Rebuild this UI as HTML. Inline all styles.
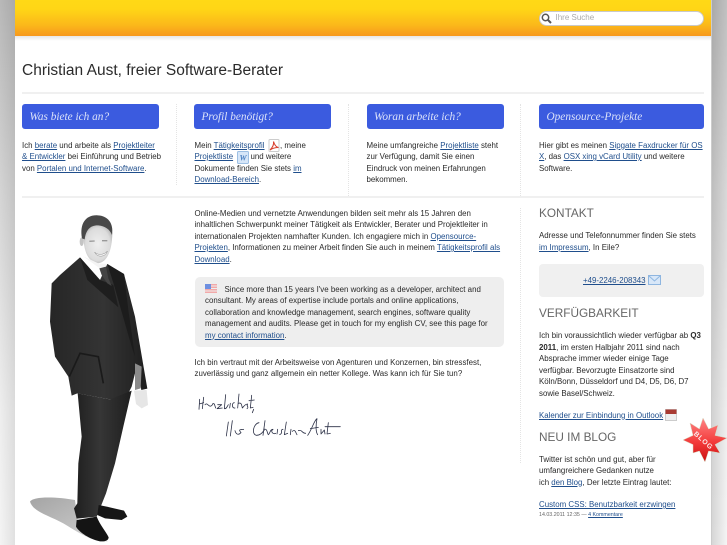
<!DOCTYPE html>
<html lang="de"><head><meta charset="utf-8"><title>Christian Aust</title>
<style>
html,body{margin:0;padding:0;background:#fff}
#p{position:relative;width:727px;height:545px;overflow:hidden;background:#fff;font-family:"Liberation Sans",sans-serif;color:#222}
.a{position:absolute}
.t{position:absolute;font-size:7.9px;line-height:11.5px;white-space:nowrap;color:#2a2a2a}
a{color:#1f4e8c;text-decoration:underline}
.b{position:absolute;top:104px;height:25px;background:#3b5bdf;border-radius:3px;color:#dbe2fa;font:italic 11.3px/27px "Liberation Serif",serif;padding-left:7.5px;box-sizing:border-box}
.h{position:absolute;left:539px;font-size:11.8px;line-height:14px;color:#666;white-space:nowrap}
.hr{position:absolute;left:22px;width:682px;height:2px;background:#f0f0f0}
.v{position:absolute;width:0;border-left:1px dotted #e4e4e4}
</style></head><body><div id="p">
<div class="a" style="left:0;top:0;width:15px;height:545px;background:linear-gradient(90deg,rgba(0,0,0,0),rgba(0,0,0,.08)),linear-gradient(#b8b8b8,#d4d4d4 35%,#eee 75%,#f4f4f4);"></div>
<div class="a" style="left:711px;top:0;width:16px;height:545px;background:linear-gradient(270deg,rgba(0,0,0,0),rgba(0,0,0,.12)),linear-gradient(#c0c0c0,#d8d8d8 35%,#eee 75%,#f4f4f4);border-left:1px solid #ccc;box-sizing:border-box"></div>
<div class="a" style="left:15px;top:0;width:696px;height:36px;background:linear-gradient(#ffd916 0,#ffd616 25%,#fbb81a 70%,#f7981d 100%)"></div>
<div class="a" style="left:15px;top:36px;width:696px;height:5px;background:linear-gradient(#e6e6e6,#fff)"></div>
<div class="a" style="left:539px;top:11px;width:165px;height:15px;box-sizing:border-box;background:#fff;border:1px solid #c9c9c9;border-radius:8px"></div>
<svg class="a" style="left:540px;top:12px" width="14" height="13" viewBox="0 0 14 13"><circle cx="5.5" cy="5.5" r="3.2" fill="none" stroke="#555" stroke-width="1.5"/><path d="M8 8l3 3" stroke="#555" stroke-width="2"/></svg>
<div class="t" style="left:555.5px;top:12px;color:#aaa;font-size:8px">Ihre Suche</div>

<div class="a" style="left:22px;top:62px;font-size:15.5px;line-height:18px;color:#2b2b2b;white-space:nowrap">Christian Aust, freier Software-Berater</div>
<div class="hr" style="top:92px"></div>
<div class="hr" style="top:196px"></div>

<div class="b" style="left:22px;width:137px">Was biete ich an?</div>
<div class="b" style="left:194px;width:137px">Profil benötigt?</div>
<div class="b" style="left:366.500px;width:137px">Woran arbeite ich?</div>
<div class="b" style="left:539px;width:165px">Opensource-Projekte</div>
<div class="v" style="left:176px;top:104px;height:81px"></div>
<div class="v" style="left:348px;top:104px;height:92px"></div>
<div class="v" style="left:520px;top:104px;height:92px"></div>
<div class="v" style="left:520px;top:208px;height:255px"></div>

<div class="t" style="left:22px;top:139.500px">Ich <a>berate</a> und arbeite als <a>Projektleiter</a></div>
<div class="t" style="left:22px;top:151px"><a>&amp; Entwickler</a> bei Einführung und Betrieb</div>
<div class="t" style="left:22px;top:162.500px">von <a>Portalen und Internet-Software</a>.</div>

<div class="t" style="left:194.500px;top:139.500px">Mein <a>Tätigkeitsprofil</a></div>
<div class="t" style="left:280px;top:139.500px">, meine</div>
<svg class="a" style="left:268px;top:139px" width="12" height="13" viewBox="0 0 12 13"><rect x="1" y=".5" width="10" height="12" rx="1" fill="#fff" stroke="#ccc"/><path d="M2 11C5 8 6 5 5.500 2.500 6.500 6 8 8 10.500 8.500 7 8.500 4 9.500 2 11z" fill="none" stroke="#d8402f" stroke-width="1.100"/></svg>
<div class="t" style="left:194.500px;top:151px"><a>Projektliste</a></div>
<svg class="a" style="left:236.500px;top:150.500px" width="12" height="13" viewBox="0 0 12 13"><rect x=".5" y=".5" width="11" height="12" rx="1" fill="#d6e6f8" stroke="#9dbfe3"/><text x="2.500" y="9.500" font-family="Liberation Serif" font-style="italic" font-weight="bold" font-size="8" fill="#4a7fc0">W</text></svg>
<div class="t" style="left:250.500px;top:151px">und weitere</div>
<div class="t" style="left:194.500px;top:162.500px">Dokumente finden Sie stets <a>im</a></div>
<div class="t" style="left:194.500px;top:174px"><a>Download-Bereich</a>.</div>

<div class="t" style="left:366.500px;top:139.500px">Meine umfangreiche <a>Projektliste</a> steht</div>
<div class="t" style="left:366.500px;top:151px">zur Verfügung, damit Sie einen</div>
<div class="t" style="left:366.500px;top:162.500px">Eindruck von meinen Erfahrungen</div>
<div class="t" style="left:366.500px;top:174px">bekommen.</div>

<div class="t" style="left:539px;top:139.500px">Hier gibt es meinen <a>Sipgate Faxdrucker für OS</a></div>
<div class="t" style="left:539px;top:151px"><a>X</a>, das <a>OSX xing vCard Utility</a> und weitere</div>
<div class="t" style="left:539px;top:162.500px">Software.</div>

<svg class="a" style="left:0;top:200px" width="190" height="345" viewBox="0 0 570 1035">
<defs><linearGradient id="sh" x1="0" y1="0" x2="1" y2="1"><stop offset="0" stop-color="#a4a4a4"/><stop offset=".6" stop-color="#c0c0c0"/><stop offset="1" stop-color="#ececec"/></linearGradient>
<linearGradient id="su" x1="0" y1="0" x2="1" y2="0"><stop offset="0" stop-color="#262626"/><stop offset=".55" stop-color="#343434"/><stop offset="1" stop-color="#1e1e1e"/></linearGradient>
<linearGradient id="pa" x1="0" y1="0" x2="1" y2="0"><stop offset="0" stop-color="#1e1e1e"/><stop offset=".45" stop-color="#363636"/><stop offset="1" stop-color="#1e1e1e"/></linearGradient>
<radialGradient id="fa" cx=".5" cy=".5" r=".6"><stop offset="0" stop-color="#efefef"/><stop offset=".7" stop-color="#dcdcdc"/><stop offset="1" stop-color="#a8a8a8"/></radialGradient></defs>
<path d="M90 905C100 888 170 890 225 900L235 980 325 1025C280 1028 240 1000 190 970 150 948 98 935 90 905z" fill="url(#sh)"/>
<ellipse cx="245" cy="125" rx="6" ry="13" fill="#c4c4c4"/>
<path d="M250 100C250 150 262 185 293 190 322 188 336 150 337 100L330 75 260 75z" fill="url(#fa)"/>
<path d="M246 115C238 70 258 44 293 46 322 47 342 68 336 105 330 88 315 78 295 76 272 75 258 88 254 118z" fill="#484848"/>
<path d="M268 124l16-1M306 122l16 0" stroke="#999" stroke-width="4" fill="none"/>
<path d="M284 156C292 166 312 166 322 153 318 172 290 174 284 156z" fill="#fbfbfb" stroke="#888" stroke-width="1.500"/>
<path d="M248 168L298 204 334 256 324 192 295 190z" fill="#f4f4f4"/>
<path d="M240 172L300 240 322 192 372 222 405 350 442 566 424 570 410 500 395 560 380 590 330 598 232 580 215 587 205 530 165 470 150 365 155 250 180 225z" fill="url(#su)"/>
<path d="M240 172L262 240 355 322 340 255 300 240z" fill="#1e1e1e"/>
<path d="M322 192L342 255 395 440 405 470 385 330 372 222z" fill="#1c1c1c"/>
<path d="M298 205L318 200 325 235 335 258 322 250 305 225z" fill="#444"/>
<path d="M208 530L240 460 295 470 310 550" fill="none" stroke="#1a1a1a" stroke-width="5"/>
<path d="M405 490L425 500 422 565 405 570z" fill="#8a8a8a"/>
<path d="M402 572L440 570 444 615 425 625 408 612z" fill="#e6e6e6"/>
<path d="M233 580L330 598 395 572 370 680 345 790 318 880 300 925 290 950 230 956 222 925 232 910 235 790 245 710z" fill="url(#pa)"/>
<path d="M296 915L320 920 372 932 382 950 365 960 315 955 292 945z" fill="#161616"/>
<path d="M230 960L290 950C300 975 318 995 326 1012 325 1022 315 1025 300 1024 270 1018 238 998 228 980z" fill="#141414"/>
</svg>

<div class="t" style="left:194.500px;top:207.500px">Online-Medien und vernetzte Anwendungen bilden seit mehr als 15 Jahren den</div>
<div class="t" style="left:194.500px;top:219px">inhaltlichen Schwerpunkt meiner Tätigkeit als Entwickler, Berater und Projektleiter in</div>
<div class="t" style="left:194.500px;top:230.500px">internationalen Projekten namhafter Kunden. Ich engagiere mich in <a>Opensource-</a></div>
<div class="t" style="left:194.500px;top:242px"><a>Projekten</a>, Informationen zu meiner Arbeit finden Sie auch in meinem <a>Tätigkeitsprofil als</a></div>
<div class="t" style="left:194.500px;top:253.500px"><a>Download</a>.</div>

<div class="a" style="left:194.500px;top:276.500px;width:309px;height:70px;background:#eeeeee;border-radius:5px"></div>
<svg class="a" style="left:205px;top:284px" width="12" height="9" viewBox="0 0 12 9"><rect width="12" height="9" fill="#f2a9a9"/><path d="M0 2h12M0 4.500h12M0 7h12" stroke="#eee" stroke-width="1"/><rect width="6" height="5" fill="#6d8fe0"/></svg>
<div class="t" style="left:224.500px;top:283.500px">Since more than 15 years I've been working as a developer, architect and</div>
<div class="t" style="left:205px;top:295px">consultant. My areas of expertise include portals and online applications,</div>
<div class="t" style="left:205px;top:306.500px">collaboration and knowledge management, search engines, software quality</div>
<div class="t" style="left:205px;top:318px">management and audits. Please get in touch for my english CV, see this page for</div>
<div class="t" style="left:205px;top:329.500px"><a>my contact information</a>.</div>

<div class="t" style="left:194.500px;top:356.500px">Ich bin vertraut mit der Arbeitsweise von Agenturen und Konzernen, bin stressfest,</div>
<div class="t" style="left:194.500px;top:368px">zuverlässig und ganz allgemein ein netter Kollege. Was kann ich für Sie tun?</div>

<svg class="a" style="left:185px;top:380px" width="170" height="70" viewBox="0 0 510 210" fill="none" stroke="#2a2f45" stroke-width="2.400" stroke-linecap="round" stroke-linejoin="round">
<path d="M44 58L42 88M56 52L52 86M43 72L56 68M60 74C68 66 70 82 78 78 86 74 80 68 88 72L92 84M98 74L110 74 96 86 112 84"/>
<path d="M122 44L118 86C124 88 126 80 130 74M136 70L134 84M148 68C140 68 140 86 150 84M162 42L158 84M160 70C170 66 170 76 172 84 176 80 180 72 188 72 182 78 194 80 186 86M200 46L196 84 204 82M192 62L208 60M206 88L202 98"/>
<path d="M130 126L124 168M142 122L136 168M150 152C152 160 158 168 168 158 158 146 168 150 176 148"/>
<path d="M222 128C206 130 198 162 214 166 226 166 232 158 238 150M240 122L234 166M236 148C248 144 246 160 250 164 256 160 254 148 264 148 256 152 262 164 272 160M278 148L276 162M294 148C284 148 296 160 284 164M304 126L298 164 308 160M318 148L316 164M322 154C332 146 332 160 336 164M340 152C352 148 350 160 362 160"/>
<path d="M368 166C380 150 388 120 396 116 392 136 392 156 398 164M376 146L400 142M408 148L408 162 418 150 420 162M430 128L426 162 436 160M420 140L466 140"/>
</svg>

<div class="h" style="left:539px;top:206px">KONTAKT</div>
<div class="t" style="left:539px;top:230px">Adresse und Telefonnummer finden Sie stets</div>
<div class="t" style="left:539px;top:241.500px"><a>im Impressum</a>, In Eile?</div>
<div class="a" style="left:539px;top:264px;width:165px;height:33px;background:#f0f0f0;border-radius:4px"></div>
<div class="t" style="left:583px;top:274.500px"><a>+49-2246-208343</a></div>
<svg class="a" style="left:648px;top:275px" width="13" height="10" viewBox="0 0 13 10"><rect x=".5" y=".5" width="12" height="9" fill="#d8e7f8" stroke="#8fb6e0"/><path d="M1 1l5.500 5L12 1" fill="none" stroke="#8fb6e0"/></svg>
<div class="h" style="left:539px;top:306px">VERFÜGBARKEIT</div>
<div class="t" style="left:539px;top:330px">Ich bin voraussichtlich wieder verfügbar ab <b>Q3</b></div>
<div class="t" style="left:539px;top:341.500px"><b>2011</b>, im ersten Halbjahr 2011 sind nach</div>
<div class="t" style="left:539px;top:353px">Absprache immer wieder einige Tage</div>
<div class="t" style="left:539px;top:364.500px">verfügbar. Bevorzugte Einsatzorte sind</div>
<div class="t" style="left:539px;top:376px">Köln/Bonn, Düsseldorf und D4, D5, D6, D7</div>
<div class="t" style="left:539px;top:387.500px">sowie Basel/Schweiz.</div>
<div class="t" style="left:539px;top:409.500px"><a>Kalender zur Einbindung in Outlook</a></div>
<svg class="a" style="left:665px;top:409px" width="12" height="12" viewBox="0 0 12 12"><rect x=".5" y=".5" width="11" height="11" fill="#eee" stroke="#ccc"/><rect x=".5" y=".5" width="11" height="4.500" fill="#a83a32"/></svg>
<div class="h" style="left:539px;top:430px">NEU IM BLOG</div>
<div class="t" style="left:539px;top:453.500px">Twitter ist schön und gut, aber für</div>
<div class="t" style="left:539px;top:465px">umfangreichere Gedanken nutze</div>
<div class="t" style="left:539px;top:476.500px">ich <a>den Blog</a>, Der letzte Eintrag lautet:</div>
<div class="t" style="left:539px;top:499px"><a>Custom CSS: Benutzbarkeit erzwingen</a></div>
<div class="t" style="left:539px;top:510px;font-size:5.300px;color:#666">14.03.2011 12:35 — <a>4 Kommentare</a></div>

<svg class="a" style="left:682px;top:416px" width="45" height="48" viewBox="0 0 45 48">
<defs><linearGradient id="st" x1="0" y1="0" x2="0" y2="1"><stop offset="0" stop-color="#ff8585"/><stop offset=".55" stop-color="#f33a3a"/><stop offset="1" stop-color="#c91010"/></linearGradient></defs>
<path d="M21 2L26.600 13 36 9 33 19.400 45 22 33 28.600 38 37 26.600 35 23 46 17.400 35 11 37 11 28.600 1 24 11 19.400 8 7 17.400 13z" fill="url(#st)" stroke="#d8d8c0" stroke-width=".5"/>
<text x="22" y="27" text-anchor="middle" transform="rotate(42 22 24)" font-family="Liberation Sans" font-weight="bold" font-size="7" letter-spacing=".8" fill="#fbe8e8">BLOG</text>
</svg>
</div></body></html>
